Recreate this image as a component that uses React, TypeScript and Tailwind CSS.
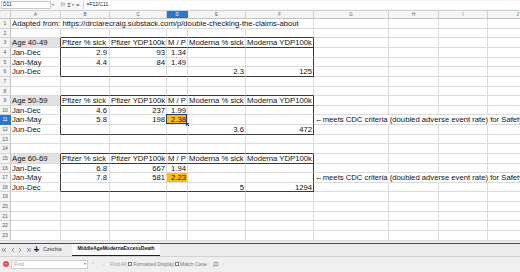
import React from "react";

type Cell = { t?: string; r?: boolean; bg?: string; sel?: boolean };

const widthCls = [
  "w-[50px]",
  "w-[49px]",
  "w-[57px]",
  "w-[21px]",
  "w-[58px]",
  "w-[68px]",
  "w-[75px]",
  "w-[50px]",
  "w-[49px]",
  "w-[60px]",
];
const letters = ["A", "B", "C", "D", "E", "F", "G", "H", "I", "J"];

const hdr = (age: string): Cell[] => [
  { t: age, bg: "gray" },
  { t: "Pfizer % sick" },
  { t: "Pfizer YDP100k" },
  { t: "M / P" },
  { t: "Moderna % sick" },
  { t: "Moderna YDP100k" },
];
const note = "←meets CDC criteria (doubled adverse event rate) for Safety Signal";

const data: Record<number, Cell[]> = {
  1: [{ t: "Adapted from: https://drclarecraig.substack.com/p/double-checking-the-claims-about" }],
  3: hdr("Age 40-49"),
  4: [{ t: "Jan-Dec" }, { t: "2.9", r: true }, { t: "93", r: true }, { t: "1.34", r: true }],
  5: [{ t: "Jan-May" }, { t: "4.4", r: true }, { t: "84", r: true }, { t: "1.49", r: true }],
  6: [{ t: "Jun-Dec" }, {}, {}, {}, { t: "2.3", r: true }, { t: "125", r: true }],
  9: hdr("Age 50-59"),
  10: [{ t: "Jan-Dec" }, { t: "4.6", r: true }, { t: "237", r: true }, { t: "1.99", r: true }],
  11: [
    { t: "Jan-May" },
    { t: "5.8", r: true },
    { t: "198", r: true },
    { t: "2.38", r: true, bg: "orange", sel: true },
    {},
    {},
    { t: note },
  ],
  12: [{ t: "Jun-Dec" }, {}, {}, {}, { t: "3.6", r: true }, { t: "472", r: true }],
  15: hdr("Age 60-69"),
  16: [{ t: "Jan-Dec" }, { t: "6.8", r: true }, { t: "667", r: true }, { t: "1.94", r: true }],
  17: [
    { t: "Jan-May" },
    { t: "7.8", r: true },
    { t: "581", r: true },
    { t: "2.23", r: true, bg: "orange" },
    {},
    {},
    { t: note },
  ],
  18: [{ t: "Jun-Dec" }, {}, {}, {}, { t: "5", r: true }, { t: "1294", r: true }],
};

const boxRows = new Set([3, 4, 5, 6, 9, 10, 11, 12, 15, 16, 17, 18]);
const darkBottomRows = new Set([2, 3, 6, 8, 9, 12, 14, 15, 18]);

function noRight(n: number, i: number) {
  if (n === 1 && i <= 4) return true;
  if ((n === 11 || n === 17) && i >= 6) return true;
  return false;
}

function GridRow({ n }: { n: number }) {
  const cells = data[n] || [];
  const selRow = n === 11;
  return (
    <div className="flex h-[9.64px]">
      <div
        className={
          "w-[11px] shrink-0 border-r border-b text-[5px] leading-[9px] text-center " +
          (selRow
            ? "bg-[#2a77d0] text-white border-r-[#2a77d0] border-b-[#2a77d0]"
            : "bg-[#f4f4f4] text-[#555] border-r-[#c4c4c4] border-b-[#d4d4d4]")
        }
      >
        {n}
      </div>
      {widthCls.map((w, i) => {
        const c = cells[i] || {};
        const darkRight = boxRows.has(n) && (i === 0 || i === 5);
        const darkBottom = darkBottomRows.has(n) && i >= 1 && i <= 5;
        const bgCls =
          c.bg === "gray" ? "bg-[#e2e2e2]" : c.bg === "orange" ? "bg-[#ffbf00]" : "";
        const rightCls = darkRight
          ? "border-r-[#3a3a3a] "
          : noRight(n, i)
          ? "border-r-transparent "
          : "border-r-[#dadada] ";
        return (
          <div
            key={i}
            className={
              "relative shrink-0 border-r border-b whitespace-nowrap text-[7.7px] leading-[9px] text-[#111] " +
              w +
              " " +
              rightCls +
              (darkBottom ? "border-b-[#3a3a3a] " : "border-b-[#dadada] ") +
              bgCls +
              " " +
              (c.r ? "text-right " + (i === 1 ? "pr-[2px]" : "pr-[1px]") : "pl-[1px]")
            }
          >
            <span className="relative z-10">{c.t}</span>
            {c.sel && (
              <>
                <div className="absolute -left-[1px] -top-[1px] right-0 bottom-0 border border-[#173f8c]" />
                <div className="absolute -right-[2px] -bottom-[2px] w-[3px] h-[3px] bg-[#173f8c]" />
              </>
            )}
          </div>
        );
      })}
    </div>
  );
}

function Chev({ dir, bar }: { dir: "l" | "r"; bar?: boolean }) {
  return (
    <svg width="6" height="6" viewBox="0 0 6 6" className="text-[#777]">
      {dir === "l" ? (
        <>
          {bar && <line x1="1" y1="1" x2="1" y2="5" stroke="currentColor" strokeWidth="0.8" />}
          <polyline points="4,1 2,3 4,5" fill="none" stroke="currentColor" strokeWidth="0.8" />
        </>
      ) : (
        <>
          <polyline points="2,1 4,3 2,5" fill="none" stroke="currentColor" strokeWidth="0.8" />
          {bar && <line x1="5" y1="1" x2="5" y2="5" stroke="currentColor" strokeWidth="0.8" />}
        </>
      )}
    </svg>
  );
}

export default function App() {
  const rows = Array.from({ length: 23 }, (_, i) => i + 1);
  return (
    <div className="w-[520px] h-[272px] overflow-hidden bg-white font-['Liberation_Sans',Arial,sans-serif] flex flex-col">
      {/* formula bar */}
      <div className="h-[11px] shrink-0 flex items-center bg-[#f7f7f7] border-b border-[#cfcfcf] text-[5px] text-[#222]">
        <div className="w-[50px] h-[8px] ml-[1px] bg-white border border-[#c8c8c8] flex items-center pl-[1px]">
          D11
        </div>
        <span className="ml-[1px] text-[#777] text-[4px]">▾</span>
        <span className="ml-[6px] text-[#3b7bbf] italic text-[5px]">ƒx</span>
        <span className="ml-[2px] text-[#444] text-[6px]">Σ</span>
        <span className="ml-[1px] text-[#777] text-[4px]">▾</span>
        <span className="ml-[2px] text-[#444] text-[6px]">=</span>
        <div className="ml-[3px] flex-1 h-[8px] bg-white border-l border-[#d0d0d0] pl-[3px] flex items-center">
          =F12/C11
        </div>
      </div>
      {/* column headers */}
      <div className="h-[8.2px] shrink-0 flex bg-[#f4f4f4] border-b border-[#c4c4c4]">
        <div className="w-[11px] shrink-0 border-r border-[#c4c4c4]" />
        {widthCls.map((w, i) => (
          <div
            key={i}
            className={
              "shrink-0 border-r text-[4.5px] leading-[7px] text-center " +
              w +
              " " +
              (i === 3 ? "bg-[#2a77d0] text-white border-[#2a77d0]" : "text-[#555] border-[#d0d0d0]")
            }
          >
            {letters[i]}
          </div>
        ))}
      </div>
      {/* grid */}
      <div className="shrink-0">
        {rows.map((n) => (
          <GridRow key={n} n={n} />
        ))}
      </div>
      <div className="h-[2px] shrink-0 bg-[#ececec]" />
      {/* sheet tabs */}
      <div className="h-[13px] shrink-0 flex items-center bg-[#ececec] border-t border-[#4a4a4a] text-[5px]">
        <div className="flex items-center gap-[1.5px] ml-[2px]">
          <Chev dir="l" bar />
          <Chev dir="l" />
          <Chev dir="r" />
          <Chev dir="r" bar />
        </div>
        <span className="ml-[3px] text-[10px] leading-[10px] font-bold text-[#111]">+</span>
        <span className="ml-[4px] text-[#333]">Czechia</span>
        <div className="ml-[11px] h-full px-[5px] flex items-center bg-[#fbfbfb] border-b border-[#222] font-bold text-[#111]">
          MiddleAgeModernaExcessDeath
        </div>
      </div>
      {/* find bar */}
      <div className="flex-1 flex items-center bg-[#efefef] border-t border-[#d2d2d2] text-[5px] text-[#666]">
        <div className="ml-[3px] w-[6px] h-[6px] rounded-full bg-[#e0504a] flex items-center justify-center text-white text-[4px] leading-none">
          ×
        </div>
        <div className="ml-[2px] w-[77px] h-[9px] bg-white border border-[#cfcfcf] flex items-center pl-[2px] text-[#999]">
          <span className="flex-1">Find</span>
          <span className="pr-[1px] text-[4px] text-[#777]">▾</span>
        </div>
        <span className="ml-[3px] text-[#aaa] text-[5px]">⌃</span>
        <span className="ml-[6px] text-[#aaa] text-[5px]">⌄</span>
        <span className="ml-[5px] text-[#999]">Find All</span>
        <div className="ml-[2px] w-[4px] h-[4px] border border-[#777] bg-white" />
        <span className="ml-[1px] text-[#777]">Formatted Display</span>
        <div className="ml-[1px] w-[4px] h-[4px] border border-[#777] bg-white" />
        <span className="ml-[1px] text-[#777]">Match Case</span>
        <svg width="7" height="7" viewBox="0 0 8 8" className="ml-[5px] text-[#666]">
          <circle cx="4.5" cy="3.5" r="2.2" fill="none" stroke="currentColor" strokeWidth="0.8" />
          <line x1="3" y1="5" x2="1" y2="7" stroke="currentColor" strokeWidth="0.8" />
        </svg>
      </div>
    </div>
  );
}
